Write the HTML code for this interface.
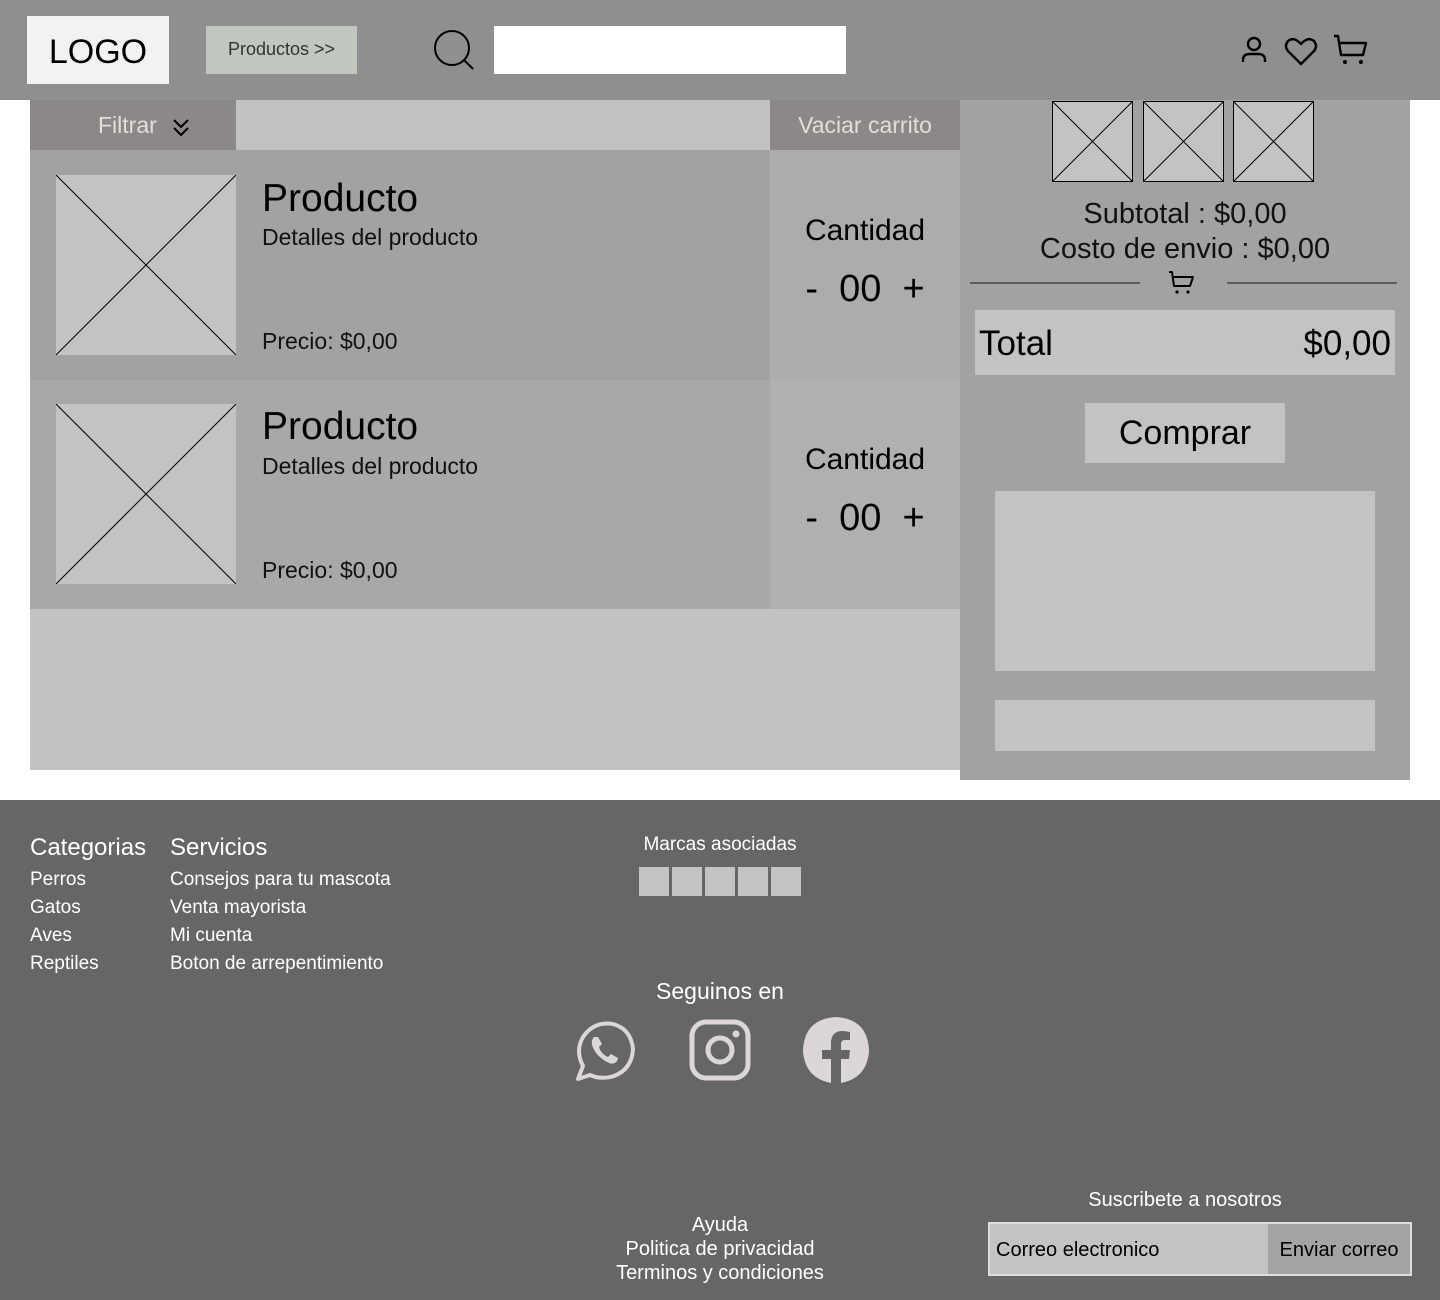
<!DOCTYPE html>
<html><head><meta charset="utf-8"><style>
*{margin:0;padding:0;box-sizing:border-box}
body{width:1440px;height:1300px;position:relative;background:#fff;font-family:"Liberation Sans",sans-serif;overflow:hidden}
.a{position:absolute;white-space:nowrap}
.ph{position:absolute;background:#c3c3c3}
.ph svg{position:absolute;left:0;top:0;width:100%;height:100%}
.w{color:#fff}
</style></head><body>
<!-- header -->
<div class="a" style="left:0;top:0;width:1440px;height:100px;background:#8f8f8f"></div>
<div class="a" style="left:27px;top:16px;width:142px;height:68px;background:#f2f2f2;font-size:34px;line-height:72px;text-align:center;color:#000">LOGO</div>
<div class="a" style="left:206px;top:26px;width:151px;height:48px;background:#c1c6bf;font-size:18px;line-height:46px;text-align:center;color:#333">Productos &gt;&gt;</div>
<svg class="a" style="left:432px;top:29px" width="44" height="44" viewBox="0 0 44 44"><circle cx="20" cy="19" r="17" fill="none" stroke="#000" stroke-width="2"/><line x1="32" y1="31" x2="41" y2="40" stroke="#000" stroke-width="2"/></svg>
<div class="a" style="left:494px;top:26px;width:352px;height:48px;background:#fff"></div>
<svg class="a" style="left:1240px;top:34px" width="30" height="32" viewBox="0 0 30 32"><circle cx="14" cy="10" r="6" fill="none" stroke="#000" stroke-width="2.4"/><path d="M3 28 V26 Q3 20 10 20 H18 Q25 20 25 26 V28" fill="none" stroke="#000" stroke-width="2.4"/></svg>
<svg class="a" style="left:1284px;top:36px" width="34" height="30" viewBox="0 0 34 30"><path d="M17 28 L4 15 Q0 10 4 5 Q10 0 17 8 Q24 0 30 5 Q34 10 30 15 Z" fill="none" stroke="#000" stroke-width="2.4" stroke-linejoin="round"/></svg>
<svg class="a" style="left:1332px;top:33px" width="38" height="34" viewBox="0 0 38 34"><path d="M2 3 H6 L9 22 H31 L34 10 H7" fill="none" stroke="#000" stroke-width="2.4" stroke-linejoin="round"/><circle cx="13" cy="29" r="2" fill="#000"/><circle cx="29" cy="29" r="2" fill="#000"/></svg>

<!-- main left -->
<div class="a" style="left:30px;top:100px;width:930px;height:670px;background:#c2c2c2"></div>
<div class="a" style="left:30px;top:100px;width:206px;height:50px;background:#8c8888;color:#e6dcdc;font-size:23px;line-height:50px;padding-left:68px">Filtrar</div>
<svg class="a" style="left:172px;top:117px" width="18" height="20" viewBox="0 0 18 20"><path d="M2 3 L9 10 L16 3 M2 11 L9 18 L16 11" fill="none" stroke="#000" stroke-width="2"/></svg>
<div class="a" style="left:770px;top:100px;width:190px;height:50px;background:#8c8888;color:#e6dcdc;font-size:23px;line-height:50px;text-align:center">Vaciar carrito</div>

<div class="a" style="left:30px;top:150px;width:740px;height:230px;background:#a3a1a2"></div>
<div class="a" style="left:770px;top:150px;width:190px;height:230px;background:#adabac"></div>
<div class="a" style="left:30px;top:380px;width:740px;height:229px;background:#a9a7a8"></div>
<div class="a" style="left:770px;top:380px;width:190px;height:229px;background:#b1afb0"></div>

<div class="ph" style="left:56px;top:175px;width:180px;height:180px"><svg viewBox="0 0 180 180" preserveAspectRatio="none"><path d="M0 0 L180 180 M180 0 L0 180" stroke="#000" stroke-width="1"/></svg></div>
<div class="ph" style="left:56px;top:404px;width:180px;height:180px"><svg viewBox="0 0 180 180" preserveAspectRatio="none"><path d="M0 0 L180 180 M180 0 L0 180" stroke="#000" stroke-width="1"/></svg></div>

<div class="a" style="left:262px;top:177px;font-size:39px;color:#000">Producto</div>
<div class="a" style="left:262px;top:224px;font-size:23px;color:#111">Detalles del producto</div>
<div class="a" style="left:262px;top:328px;font-size:23px;color:#111">Precio: $0,00</div>
<div class="a" style="left:770px;top:214px;width:190px;text-align:center;font-size:30px;color:#000">Cantidad</div>
<div class="a" style="left:770px;top:268px;width:190px;text-align:center;font-size:38px;color:#000">-&nbsp; 00&nbsp; +</div>

<div class="a" style="left:262px;top:405px;font-size:39px;color:#000">Producto</div>
<div class="a" style="left:262px;top:453px;font-size:23px;color:#111">Detalles del producto</div>
<div class="a" style="left:262px;top:557px;font-size:23px;color:#111">Precio: $0,00</div>
<div class="a" style="left:770px;top:443px;width:190px;text-align:center;font-size:30px;color:#000">Cantidad</div>
<div class="a" style="left:770px;top:497px;width:190px;text-align:center;font-size:38px;color:#000">-&nbsp; 00&nbsp; +</div>

<!-- right panel -->
<div class="a" style="left:960px;top:100px;width:450px;height:680px;background:#a3a1a2"></div>
<div class="ph" style="left:1052px;top:101px;width:81px;height:81px;border:1px solid #000"><svg viewBox="0 0 80 80" preserveAspectRatio="none"><path d="M0 0 L80 80 M80 0 L0 80" stroke="#000" stroke-width="1"/></svg></div>
<div class="ph" style="left:1143px;top:101px;width:81px;height:81px;border:1px solid #000"><svg viewBox="0 0 80 80" preserveAspectRatio="none"><path d="M0 0 L80 80 M80 0 L0 80" stroke="#000" stroke-width="1"/></svg></div>
<div class="ph" style="left:1233px;top:101px;width:81px;height:81px;border:1px solid #000"><svg viewBox="0 0 80 80" preserveAspectRatio="none"><path d="M0 0 L80 80 M80 0 L0 80" stroke="#000" stroke-width="1"/></svg></div>
<div class="a" style="left:960px;top:198px;width:450px;text-align:center;font-size:29px;color:#111">Subtotal : $0,00</div>
<div class="a" style="left:960px;top:233px;width:450px;text-align:center;font-size:29px;color:#111">Costo de envio : $0,00</div>
<div class="a" style="left:970px;top:282px;width:170px;height:2px;background:#5c5c5c"></div>
<div class="a" style="left:1227px;top:282px;width:170px;height:2px;background:#5c5c5c"></div>
<svg class="a" style="left:1168px;top:270px" width="28" height="26" viewBox="0 0 28 26"><path d="M1 2 H4 L6 16 H22 L25 7 H5" fill="none" stroke="#000" stroke-width="2" stroke-linejoin="round"/><circle cx="9" cy="22" r="1.6" fill="#000"/><circle cx="20" cy="22" r="1.6" fill="#000"/></svg>
<div class="a" style="left:975px;top:310px;width:420px;height:65px;background:#c3c3c3"></div>
<div class="a" style="left:979px;top:324px;font-size:35px;color:#000">Total</div>
<div class="a" style="left:1180px;top:324px;width:211px;text-align:right;font-size:35px;color:#000">$0,00</div>
<div class="a" style="left:1085px;top:403px;width:200px;height:60px;background:#c3c3c3;text-align:center;line-height:60px;font-size:34px;color:#000">Comprar</div>
<div class="a" style="left:995px;top:491px;width:380px;height:180px;background:#c3c3c3"></div>
<div class="a" style="left:995px;top:700px;width:380px;height:51px;background:#c3c3c3"></div>

<!-- footer -->
<div class="a" style="left:0;top:800px;width:1440px;height:500px;background:#666"></div>
<div class="a w" style="left:30px;top:834px;font-size:24px">Categorias</div>
<div class="a w" style="left:170px;top:834px;font-size:24px">Servicios</div>
<div class="a w" style="left:30px;top:866px;font-size:19px;line-height:28px">Perros<br>Gatos<br>Aves<br>Reptiles</div>
<div class="a w" style="left:170px;top:866px;font-size:19px;line-height:28px">Consejos para tu mascota<br>Venta mayorista<br>Mi cuenta<br>Boton de arrepentimiento</div>
<div class="a w" style="left:620px;top:834px;width:200px;text-align:center;font-size:19px">Marcas asociadas</div>
<div class="a" style="left:639px;top:867px;width:30px;height:29px;background:#c3c3c3"></div>
<div class="a" style="left:672px;top:867px;width:30px;height:29px;background:#c3c3c3"></div>
<div class="a" style="left:705px;top:867px;width:30px;height:29px;background:#c3c3c3"></div>
<div class="a" style="left:738px;top:867px;width:30px;height:29px;background:#c3c3c3"></div>
<div class="a" style="left:771px;top:867px;width:30px;height:29px;background:#c3c3c3"></div>
<div class="a w" style="left:570px;top:978px;width:300px;text-align:center;font-size:23px">Seguinos en</div>
<svg class="a" style="left:572px;top:1018px" width="64" height="64" viewBox="0 0 64 64"><path d="M6 61 L11 48 Q3 33 11 19 Q22 3 41 6 Q59 11 61 31 Q60 51 42 58 Q29 62 18 57 Z" fill="none" stroke="#ddd6d6" stroke-width="4" stroke-linejoin="round"/><path d="M22 19 Q19 22 20 27 Q24 39 37 45 Q42 47 45 43 L46 40 L39 36 L36 39 Q29 36 27 29 L30 26 L26 19 Z" fill="#ddd6d6"/></svg>
<svg class="a" style="left:689px;top:1019px" width="62" height="62" viewBox="0 0 62 62"><rect x="3" y="3" width="56" height="56" rx="14" fill="none" stroke="#ddd6d6" stroke-width="5"/><circle cx="31" cy="31" r="12" fill="none" stroke="#ddd6d6" stroke-width="5"/><circle cx="47" cy="15" r="3.5" fill="#ddd6d6"/></svg>
<svg class="a" style="left:802px;top:1016px" width="68" height="68" viewBox="0 0 68 68"><path d="M29 67 Q3 62 1 35 Q2 3 34 1 Q66 3 67 35 Q65 62 39 67 V43 H47 L48 34 H39 V28 Q39 24 43 24 H48 V16 Q43 15 39 15 Q29 16 29 27 V34 H20 V43 H29 Z" fill="#ddd6d6"/></svg>
<div class="a w" style="left:570px;top:1213px;width:300px;text-align:center;font-size:20px;line-height:24px">Ayuda<br>Politica de privacidad<br>Terminos y condiciones</div>
<div class="a w" style="left:985px;top:1189px;width:400px;text-align:center;font-size:20px">Suscribete a nosotros</div>
<div class="a" style="left:988px;top:1222px;width:424px;height:54px;background:#c3c3c3;border:2px solid #ddd"></div>
<div class="a" style="left:1268px;top:1224px;width:142px;height:50px;background:#a5a3a4"></div>
<div class="a" style="left:996px;top:1239px;font-size:20px;color:#000">Correo electronico</div>
<div class="a" style="left:1268px;top:1239px;width:142px;text-align:center;font-size:20px;color:#000">Enviar correo</div>
</body></html>
